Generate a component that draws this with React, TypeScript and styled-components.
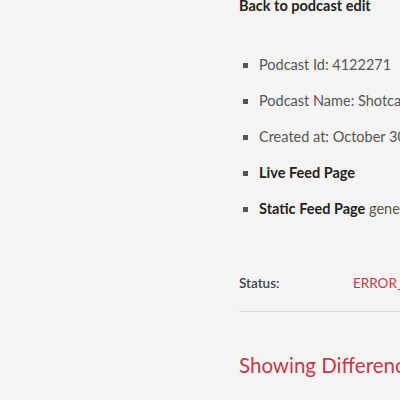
import React from "react";
import styled, { createGlobalStyle } from "styled-components";

const GlobalStyle = createGlobalStyle`
  html, body {
    margin: 0;
    padding: 0;
    background: #f5f4f2;
    overflow: hidden;
  }
  body {
    font-family: Lato, "Noto Sans", "Liberation Sans", sans-serif;
    color: #333;
  }
`;

const Page = styled.div`
  display: flex;
  width: 400px;
  height: 400px;
  overflow: hidden;
`;

const Aside = styled.div`
  flex: 0 0 239px;
`;

const Main = styled.main`
  flex: 0 0 520px;
  white-space: nowrap;
`;

const BackLink = styled.a`
  display: block;
  margin-top: -4px;
  font-size: 14.5px;
  line-height: 20px;
  font-weight: 700;
  color: #222;
  text-decoration: none;
`;

const InfoList = styled.ul`
  list-style: none;
  margin: 39px 0 0;
  padding: 0;
`;

const InfoItem = styled.li`
  position: relative;
  padding-left: 20px;
  font-size: 14.5px;
  line-height: 20px;
  margin-bottom: 16px;
  color: #555;

  &::before {
    content: "";
    position: absolute;
    left: 4px;
    top: 8px;
    width: 5px;
    height: 5px;
    background: #555;
  }

  strong {
    color: #222;
    font-weight: 700;
  }
`;

const StatusRow = styled.div`
  display: grid;
  grid-template-columns: 114px auto;
  margin-top: 54px;
  font-size: 13.5px;
  line-height: 20px;
  padding-bottom: 18px;
  border-bottom: 1px solid #dcdad6;
`;

const StatusLabel = styled.span`
  color: #444;
  font-weight: 600;
`;

const StatusValue = styled.span`
  color: #c23a4c;
`;

const SectionTitle = styled.h2`
  margin: 39px 0 0;
  font-size: 20.5px;
  line-height: 28px;
  font-weight: 400;
  color: #c23a4c;
`;

export default function App() {
  return (
    <>
      <GlobalStyle />
      <Page>
        <Aside />
        <Main>
          <BackLink href="#">Back to podcast edit</BackLink>
          <InfoList>
            <InfoItem>Podcast Id: 4122271</InfoItem>
            <InfoItem>Podcast Name: Shotcast Weekly</InfoItem>
            <InfoItem>Created at: October 30, 2020</InfoItem>
            <InfoItem>
              <strong>Live Feed Page</strong>
            </InfoItem>
            <InfoItem>
              <strong>Static Feed Page</strong> generated
            </InfoItem>
          </InfoList>
          <StatusRow>
            <StatusLabel>Status:</StatusLabel>
            <StatusValue>ERROR_GENERATING</StatusValue>
          </StatusRow>
          <SectionTitle>Showing Differences</SectionTitle>
        </Main>
      </Page>
    </>
  );
}
